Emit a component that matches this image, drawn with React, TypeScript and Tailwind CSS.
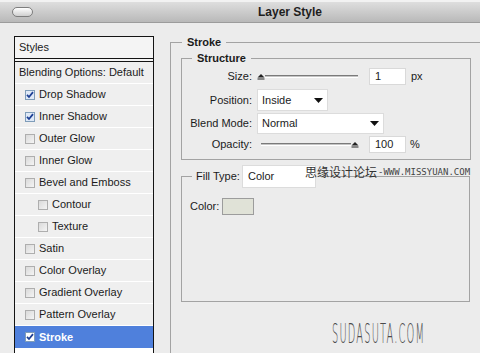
import React from "react";

const font = { fontFamily: '"Liberation Sans", Arial, sans-serif' };

function Check({ checked, white }: { checked?: boolean; white?: boolean }) {
  if (checked) {
    return (
      <svg width="10" height="10" viewBox="0 0 10 10" className="shrink-0">
        <rect x="0.5" y="0.5" width="9" height="9" fill={white ? "#ffffff" : "#dfe9f7"} stroke="#7f9db9" />
        <path d="M2 4.8 L4 7 L8 2.2" fill="none" stroke="#1c3f94" strokeWidth="1.8" />
      </svg>
    );
  }
  return (
    <svg width="10" height="10" viewBox="0 0 10 10" className="shrink-0">
      <defs>
        <linearGradient id="cbg" x1="0" y1="0" x2="1" y2="1">
          <stop offset="0" stopColor="#d8d8d8" />
          <stop offset="1" stopColor="#f6f6f6" />
        </linearGradient>
      </defs>
      <rect x="0.5" y="0.5" width="9" height="9" fill="url(#cbg)" stroke="#aeaeae" />
    </svg>
  );
}

function Row({
  label,
  checked,
  indent,
  selected,
}: {
  label: string;
  checked?: boolean;
  indent?: boolean;
  selected?: boolean;
}) {
  return (
    <div
      className={
        selected
          ? "h-[22px] flex items-center gap-[4px] bg-[#4f80dc] text-white font-bold"
          : "h-[22px] flex items-center gap-[4px] bg-[#efefef] border-b border-white text-[#1b1b1b]"
      }
    >
      <div className={indent ? "w-[33px] flex justify-end" : "w-[20px] flex justify-end"}>
        <Check checked={checked} white={selected} />
      </div>
      <span className="text-[11px] leading-none">{label}</span>
    </div>
  );
}

function Thumb() {
  return (
    <svg width="8" height="6" viewBox="0 0 8 6" className="shrink-0">
      <path d="M4 0 L7.5 3.5 L0.5 3.5 Z" fill="#222" />
      <rect x="0.5" y="4.5" width="7" height="1" fill="#222" />
    </svg>
  );
}

function Arrow() {
  return (
    <svg width="9" height="5" viewBox="0 0 9 5" className="shrink-0">
      <path d="M0 0 L9 0 L4.5 5 Z" fill="#111" />
    </svg>
  );
}

export default function App() {
  return (
    <div className="w-[480px] h-[353px] overflow-hidden bg-[#ececec] relative" style={font}>
      {/* Title bar */}
      <div className="h-[23px] flex items-center bg-gradient-to-b from-[#dedede] to-[#b9b9b9] border-t-2 border-t-[#f2f2f2] border-b border-b-[#9c9c9c]">
        <div className="ml-[12px] w-[21px] h-[10px] rounded-full border border-[#7d7d7d] bg-gradient-to-b from-[#ffffff] to-[#cfcfcf]" />
        <div className="ml-[225px] text-[12px] font-bold text-[#1e1e1e]">Layer Style</div>
      </div>

      <div className="flex">
        {/* Left styles list */}
        <div className="pl-[14px] pt-[13px]">
          <div className="w-[140px] h-[330px] border border-[#141414] border-b-0 bg-white">
            <div className="h-[22px] flex items-center pl-[4px] bg-[#f4f4f4] text-[11px] text-[#1b1b1b] border-b border-[#141414]">
              Styles
            </div>
            <div className="h-[2px] bg-[#f4f4f4] border-b border-[#141414] box-content" />
            <div className="h-[22px] flex items-center pl-[4px] bg-[#efefef] border-b border-white text-[11px] text-[#1b1b1b]">
              Blending Options: Default
            </div>
            <Row label="Drop Shadow" checked />
            <Row label="Inner Shadow" checked />
            <Row label="Outer Glow" />
            <Row label="Inner Glow" />
            <Row label="Bevel and Emboss" />
            <Row label="Contour" indent />
            <Row label="Texture" indent />
            <Row label="Satin" />
            <Row label="Color Overlay" />
            <Row label="Gradient Overlay" />
            <Row label="Pattern Overlay" />
            <Row label="Stroke" checked selected />
          </div>
        </div>

        {/* Right panel */}
        <div className="ml-[16px] pt-[13px]">
          <fieldset className="w-[309px] h-[330px] border border-[#a3a3a3] border-b-0 p-0 m-0">
            <legend className="ml-[11px] px-[5px] text-[11px] leading-[12px] font-bold text-[#1b1b1b]">Stroke</legend>

            <fieldset className="ml-[10px] mt-[4px] w-[290px] h-[108px] border border-[#a3a3a3] p-0">
              <legend className="ml-[10px] px-[5px] text-[11px] leading-[12px] font-bold text-[#1b1b1b]">
                Structure
              </legend>
              <div className="mt-[4px] flex flex-col text-[11px] text-[#1b1b1b]">
                {/* Size */}
                <div className="h-[17px] flex items-center">
                  <div className="w-[70px] text-right">Size:</div>
                  <div className="ml-[5px] w-[101px] flex items-center">
                    <Thumb />
                    <div className="flex-1 h-[3px] border-t border-[#7a7a7a] border-b border-b-white bg-[#c4c4c4]" />
                  </div>
                  <div className="ml-[11px] w-[37px] h-[17px] bg-white border border-[#d9d9d9] flex items-center pl-[5px]">1</div>
                  <div className="ml-[5px]">px</div>
                </div>
                {/* Position */}
                <div className="mt-[4px] h-[22px] flex items-center">
                  <div className="w-[70px] text-right">Position:</div>
                  <div className="ml-[5px] w-[71px] h-[22px] bg-white border border-[#dcdcdc] flex items-center pl-[4px] pr-[4px] justify-between">
                    <span>Inside</span>
                    <Arrow />
                  </div>
                </div>
                {/* Blend mode */}
                <div className="mt-[2px] h-[21px] flex items-center">
                  <div className="w-[70px] text-right">Blend Mode:</div>
                  <div className="ml-[5px] w-[127px] h-[21px] bg-white border border-[#dcdcdc] flex items-center pl-[4px] pr-[4px] justify-between">
                    <span>Normal</span>
                    <Arrow />
                  </div>
                </div>
                {/* Opacity */}
                <div className="mt-[2px] h-[17px] flex items-center">
                  <div className="w-[70px] text-right">Opacity:</div>
                  <div className="ml-[9px] w-[98px] flex items-center">
                    <div className="flex-1 h-[3px] border-t border-[#7a7a7a] border-b border-b-white bg-[#c4c4c4]" />
                    <Thumb />
                  </div>
                  <div className="ml-[10px] w-[37px] h-[17px] bg-white border border-[#d9d9d9] flex items-center pl-[5px]">100</div>
                  <div className="ml-[4px]">%</div>
                </div>
              </div>
            </fieldset>

            <fieldset className="ml-[10px] mt-[5px] w-[289px] h-[137px] border border-[#a3a3a3] p-0">
              <legend className="ml-[10px] px-[4px] text-[11px] text-[#1b1b1b]">
                <div className="flex items-center h-[23px]">
                  <span className="w-[46px]">Fill Type:</span>
                  <div className="w-[74px] h-[23px] bg-white border border-[#dcdcdc] flex items-center pl-[5px]">Color</div>
                </div>
              </legend>
              <div className="mt-[10px] pl-[8px] flex items-center text-[11px] text-[#1b1b1b]">
                <span className="w-[32px]">Color:</span>
                <div className="w-[32px] h-[17px] bg-[#e0e2d7] border border-[#9c9c9c]" />
              </div>
            </fieldset>

            <div className="mt-[22px] ml-[161px] h-[20px] flex items-center whitespace-nowrap">
              <span
                className="inline-block origin-left scale-x-[0.38] text-[26px] leading-none text-[#4a4a4a] tracking-[3px]"
                style={{ fontFamily: '"DejaVu Sans", sans-serif', fontWeight: 300 }}
              >
                SUDASUTA.COM
              </span>
            </div>
          </fieldset>
        </div>
      </div>

      {/* watermark overlay */}
      <div className="absolute left-[305px] top-[164px] flex items-center h-[16px] whitespace-nowrap pointer-events-none">
        <span
          className="text-[12px] leading-none text-[#333]"
          style={{ fontFamily: '"Noto Sans CJK SC", sans-serif' }}
        >
          思缘设计论坛
        </span>
        <span
          className="text-[9px] leading-none text-[#444] ml-[1px]"
          style={{ fontFamily: '"DejaVu Sans Mono", monospace' }}
        >
          -WWW.MISSYUAN.COM
        </span>
      </div>
    </div>
  );
}
